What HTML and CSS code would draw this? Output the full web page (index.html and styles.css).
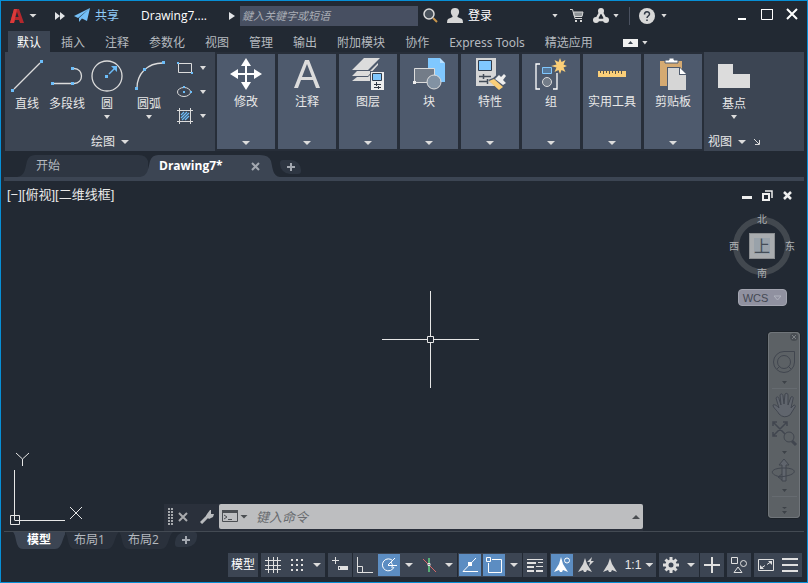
FILE: index.html
```html
<!DOCTYPE html>

<html lang="zh-CN">
    <head>
        <meta charset="utf-8">
        <title>Drawing7</title>
        <meta name="viewport" content="width=device-width, initial-scale=1">
        <link rel="stylesheet" href="styles.css">
    </head>

    <body>
        <div class="window">
            <header class="titlebar">
                <button class="app-menu" aria-label="A">
                    <svg width="14" height="16" viewBox="0 0 14 16"><path d="M0 15L4 1h5l5 14h-4l-1-3H5l-1 3z" fill="#b3282d"/><path d="M0 15L4 1h3L4 15z" fill="#dc3a3a"/><path d="M5.500 9L7 4l1.600 5z" fill="#222933"/></svg>
                    <span class="caret"></span>
                </button>
                <button class="expand" aria-label="&gt;&gt;">
                    <svg width="10" height="8"><path d="M0 0l5 4-5 4zM5 0l5 4-5 4z" fill="#e3e5e8"/></svg>
                </button>
                <button class="share">
                    <svg width="16" height="15" viewBox="0 0 16 15"><path d="M16 0L0 8l4 2zM16 0L5 10v4l2.500-3zM16 0L7 10l6 3z" fill="#74bff7"/></svg>
                    <span>共享</span>
                </button>
                <span class="doc-title">Drawing7....</span>
                <div class="search">
                    <svg width="6" height="8"><path d="M0 0l6 4-6 4z" fill="#e3e5e8"/></svg>
                    <input type="text" placeholder="鍵入关鍵字或短语" aria-label="鍵入关鍵字或短语">
                    <button aria-label="搜索">
                        <svg width="15" height="15" viewBox="0 0 15 15"><path d="M10 10l4 4" stroke="#c9964c" stroke-width="2"/><circle cx="6" cy="6" r="5" fill="#49525c" stroke="#dcdcdc" stroke-width="1.500"/></svg>
                    </button>
                </div>
                <button class="login">
                    <svg width="16" height="15" viewBox="0 0 16 15"><path d="M8 0c5 0 5 5 2.500 8v1L15 11q1 1 1 4H0q0-3 1-4l4.500-2V8C3 5 3 0 8 0z" fill="#d6d6d6"/></svg>
                    <span>登录</span>
                </button>
                <div class="title-tools">
                    <button aria-label="登录菜单"><span class="caret small"></span></button>
                    <button aria-label="购物车"><svg width="14" height="14" viewBox="0 0 14 14"><path d="M0 .5h2.500L5 9.500h7" fill="none" stroke="#d6d6d6"/><path d="M3.500 3H13l-1 4.500H4.500z" fill="#8f9498" stroke="#d6d6d6"/><path d="M5 11h2v2H5zM10 11h2v2h-2z" fill="#d6d6d6"/></svg></button>
                    <button class="apps" aria-label="应用"><svg width="16" height="15" viewBox="0 0 16 15"><path d="M8 3L3 12h10z" fill="none" stroke="#dcdcdc" stroke-width="2.500"/><circle cx="8" cy="3" r="3" fill="#dcdcdc"/><circle cx="3" cy="12" r="3" fill="#dcdcdc"/><circle cx="13" cy="12" r="3" fill="#dcdcdc"/></svg><span class="caret small"></span></button>
                    <button class="help" aria-label="帮助"><svg width="16" height="16" viewBox="0 0 16 16"><circle cx="8" cy="8" r="8" fill="#d8d8d8"/><path d="M5.500 6.500C5.500 3 10.500 3 10.500 6 10.500 8 8 8 8 10M8 11.500v1.500" fill="none" stroke="#303844" stroke-width="1.500"/></svg><span class="caret small"></span></button>
                </div>
                <div class="window-buttons">
                    <button aria-label="最小化"><svg width="12" height="12"><path d="M2 10h8v2H2z" fill="#fff"/></svg></button>
                    <button aria-label="最大化"><svg width="12" height="12"><path d="M.5 1.500h11v10H.5z" fill="none" stroke="#fff"/><path d="M0 1h12v1H0z" fill="#fff"/></svg></button>
                    <button aria-label="关闭"><svg width="12" height="12"><path d="M1 1l10 10M11 1L1 11" stroke="#fff" stroke-width="2"/></svg></button>
                </div>
            </header>

            <nav class="ribbon-tabs">
                <a class="active" href="#">默认</a>
                <a href="#">插入</a>
                <a href="#">注释</a>
                <a href="#">参数化</a>
                <a href="#">视图</a>
                <a href="#">管理</a>
                <a href="#">输出</a>
                <a href="#">附加模块</a>
                <a href="#">协作</a>
                <a href="#">Express Tools</a>
                <a href="#">精选应用</a>
                <button class="ribbon-toggle" aria-label="最小化功能区">
                    <svg width="15" height="8"><path d="M0 0h15v8H0z" fill="#f0f0f0"/><path d="M5 5l2.500-3L10 5z" fill="#39424f"/></svg>
                    <span class="caret small"></span>
                </button>
            </nav>

            <section class="ribbon">
                <div class="panel draw">
                    <div class="tools">
                        <button class="tool">
                            <svg width="32" height="32"><path d="M3 29L29 3" stroke="#dcdcdc" stroke-width="1.300"/><path d="M0 29h3v3H0zM29 0h3v3h-3z" fill="#6cbdf9"/></svg>
                            <span>直线</span>
                        </button>
                        <button class="tool">
                            <svg width="32" height="32"><path d="M2 23.500h19M23 8.500c10 0 10 15 0 15" fill="none" stroke="#dcdcdc" stroke-width="1.300"/><path d="M0 22h3v3H0zM20 7h3v3h-3zM20 22h3v3h-3z" fill="#6cbdf9"/></svg>
                            <span>多段线</span>
                        </button>
                        <button class="tool">
                            <svg width="32" height="32"><circle cx="16" cy="16" r="15" fill="none" stroke="#dcdcdc" stroke-width="1.300"/><path d="M14 15h3v3h-3zM26 6v6l-6-6z" fill="#6cbdf9"/><path d="M18 14l6-6" stroke="#6cbdf9" stroke-width="1.500"/></svg>
                            <span>圆</span>
                            <span class="caret small"></span>
                        </button>
                        <button class="tool wide">
                            <svg width="32" height="32"><path d="M4 28C4 14 14 3 30 3" fill="none" stroke="#dcdcdc" stroke-width="1.300"/><path d="M2 27h3v3H2zM10 8h3v3h-3zM29 1h3v3h-3z" fill="#6cbdf9"/></svg>
                            <span>圆弧</span>
                            <span class="caret small"></span>
                        </button>
                        <div class="small-tools">
                            <button aria-label="矩形"><svg width="16" height="16"><path d="M1.500 3.500h13v9h-13z" fill="none" stroke="#dcdcdc"/><path d="M0 2h2v2H0zM14 12h2v2h-2z" fill="#6cbdf9"/></svg><span class="caret small"></span></button>
                            <button aria-label="椭圆"><svg width="16" height="16"><ellipse cx="7" cy="8" rx="6.500" ry="4.500" fill="none" stroke="#dcdcdc"/><path d="M6 2h2v2H6zM6 7h2v2H6zM13 7h2v2h-2z" fill="#6cbdf9"/></svg><span class="caret small"></span></button>
                            <button aria-label="图案填充"><svg width="16" height="16"><path d="M0 2.500h16M0 13.500h16M2.500 0v16M13.500 0v16" stroke="#dcdcdc"/><path d="M4 7l3-3M4 10l6-6M5 12l7-7M8 12l4-4" stroke="#6cbdf9" stroke-width="1.200"/></svg><span class="caret small"></span></button>
                        </div>
                    </div>
                    <button class="panel-title">绘图 <span class="caret"></span></button>
                </div>

                <div class="collapsed-panels">
                    <button class="collapsed">
                        <svg width="32" height="32"><path d="M16 0l5 8h-4v7h7v-4l8 5-8 5v-4h-7v7h4l-5 8-5-8h4v-7H8v4l-8-5 8-5v4h7V8h-4z" fill="#fff"/></svg>
                        <span>修改</span><span class="caret"></span>
                    </button>
                    <button class="collapsed">
                        <svg width="32" height="32"><path d="M3 30L14 2h4l11 28h-4l-3-8H10l-3 8zM11 19h10L16 6z" fill="#dcdcdc"/></svg>
                        <span>注释</span><span class="caret"></span>
                    </button>
                    <button class="collapsed">
                        <svg width="32" height="32"><path d="M12 0h16L16 12H0zM5 13h13l8-8v2L16 18H0zM5 19h11l2-2v6H0z" fill="#dcdcdc"/><path d="M18 13h14v19H18z" fill="#4e5a6d"/><path d="M19 14h13v18H19z" fill="#eee"/><path d="M20.500 15.500h9v7h-9z" fill="#80c8ff" stroke="#303c4c"/><path d="M22 26.500h7M24.500 24v4M22 29.500h7M26.500 28v3" stroke="#303844"/></svg>
                        <span>图层</span><span class="caret"></span>
                    </button>
                    <button class="collapsed">
                        <svg width="32" height="32"><path d="M15 0h12v5h5v19H15z" fill="#80c8ff"/><path d="M27 0l5 5h-5z" fill="#b9e0ff"/><path d="M1.500 10.500h20v14h-20z" fill="#737c88" stroke="#dcdcdc"/><circle cx="21" cy="24" r="7" fill="#8292a3" stroke="#dcdcdc"/><path d="M0 23h3v3H0z" fill="#eee"/></svg>
                        <span>块</span><span class="caret"></span>
                    </button>
                    <button class="collapsed">
                        <svg width="32" height="32"><path d="M2 0h20v28H2z" fill="#d6d6d6"/><path d="M4.500 2.500h13v10h-13z" fill="#80c8ff" stroke="#303c4c"/><path d="M5 18.500h12M5 23.500h9M9.500 16v5M13.500 21v5" stroke="#444d59" stroke-width="1.500"/><path d="M14 22l5-2 7-6 3 2 4 1-4 4 3 4-6 7z" fill="#4e5a6d"/><path d="M21 21l4-4 2 2 3-3 2 2-3 4 3 3-3 2z" fill="#eee"/><path d="M15 23l5-2 9 8-4 3z" fill="#fbcf78"/></svg>
                        <span>特性</span><span class="caret"></span>
                    </button>
                    <button class="collapsed">
                        <svg width="32" height="32"><path d="M5 6H1v25h4M18 31h4V15" fill="none" stroke="#fff" stroke-width="1.300"/><path d="M7.500 9.500h9v6h-9z" fill="#56799c" stroke="#80c8ff"/><circle cx="12" cy="24" r="4.500" fill="#737c88" stroke="#dcdcdc"/><path d="M25 0l1.500 4 4-2-2 4.500L32 8l-3.500 1.500 2 4.500-4-2-1.500 4-1.500-4-4 2 2-4.500L16 8l5.500-1.500-2-4.500 4 2z" fill="#fbcf78"/></svg>
                        <span>组</span><span class="caret"></span>
                    </button>
                    <button class="collapsed">
                        <svg width="32" height="32"><path d="M2 13h28v6H2z" fill="#fbcf78"/><path d="M4.500 13v2M7.500 13v3M10.500 13v2M13.500 13v3M16.500 13v2M19.500 13v3M22.500 13v2M25.500 13v3" stroke="#5b5548"/></svg>
                        <span>实用工具</span><span class="caret"></span>
                    </button>
                    <button class="collapsed">
                        <svg width="32" height="32"><path d="M3 3h22v25H3z" fill="#d5aa72"/><path d="M8 2h4V0h5v2h4v3H8z" fill="#fff" stroke="#4e5a6d"/><path d="M10 9h13l7 7v16H10z" fill="#4e5a6d"/><path d="M11 10h11v7h7v15H11z" fill="#d6d6d6"/><path d="M23 10l6 6h-6z" fill="#fff"/></svg>
                        <span>剪贴板</span><span class="caret"></span>
                    </button>
                </div>

                <div class="panel view">
                    <div class="tools">
                        <button class="tool">
                            <svg width="32" height="32"><path d="M0 4h15v10h17v14H0z" fill="#dcdcdc"/></svg>
                            <span>基点</span>
                            <span class="caret small"></span>
                        </button>
                    </div>
                    <button class="panel-title">视图 <span class="caret"></span><svg class="launcher" width="6" height="6"><path d="M0 0l5 5M5.500 1v4.500H1" fill="none" stroke="#dcdcdc"/></svg></button>
                </div>
            </section>

            <nav class="file-tabs">
                <a class="file-tab" href="#">开始</a>
                <a class="file-tab active" href="#">Drawing7*
                    <svg width="9" height="9"><path d="M1 1l7 7M8 1L1 8" stroke="#a3a8b0" stroke-width="2"/></svg>
                </a>
                <button class="new-tab" aria-label="新图形"><svg width="8" height="8"><path d="M4 0v8M0 4h8" stroke="#a3a8b0" stroke-width="2"/></svg></button>
            </nav>

            <main class="canvas">
                <div class="viewport-label">[−][俯视][二维线框]</div>

                <div class="viewport-buttons">
                    <button aria-label="最小化视口"><svg width="11" height="11"><path d="M0 6h10v3H0z" fill="#eee"/></svg></button>
                    <button aria-label="还原视口"><svg width="11" height="11"><path d="M1 4h6v6H1z" fill="none" stroke="#eee" stroke-width="2"/><path d="M3 1h7v7" fill="none" stroke="#eee" stroke-width="1.500"/></svg></button>
                    <button aria-label="关闭视口"><svg width="11" height="11"><path d="M2 2l7 7M9 2L2 9" stroke="#eee" stroke-width="2.500"/></svg></button>
                </div>

                <svg class="crosshair" width="97" height="97"><path d="M0 48.500h45M52 48.500h45M48.500 0v45M48.500 52v45M45.500 45.500h6v6h-6z" fill="none" stroke="#e6e6e6"/></svg>

                <svg class="ucs" width="75" height="75"><path d="M5.500 20v50M5.500 70.500H56M1.500 65.500h9v9h-9zM7 3l6.500 6L20 3M13.500 9v7M61 57l12 12M73 57L61 69" fill="none" stroke="#e6e6e6"/></svg>

                <div class="viewcube">
                    <span class="north">北</span>
                    <span class="west">西</span>
                    <button class="face"><span>上</span></button>
                    <span class="east">东</span>
                    <span class="south">南</span>
                </div>
                <button class="wcs">WCS <svg width="9" height="6"><path d="M1 1h7L4.500 5z" fill="none" stroke="#b0b3be"/></svg></button>

                <svg class="navbar" width="32" height="186" fill="none" stroke="#41464f">
                    <path d="M4 56.500h25M4 164.500h25" stroke="#666b70"/>
                    <circle cx="26" cy="5" r="4" fill="#484d53" stroke="none"/><path d="M24 3l4 4M28 3l-4 4" stroke="#7b8085"/>
                    <path d="M16 19.500h10.500V30a10.500 10.500 0 1 1-10.500-10.500z"/><circle cx="16" cy="30" r="6.500"/><path d="M9 37l3-3M23 37l-3-3"/>
                    <path d="M11 82c-2-4-6-6-6-9 2-1 4 1 6 3L8 66c1-2 3-1 3 1l2 6-1-10c1-2 3-1 3 1l1 8 1-10c1-1 3-1 3 1v10l3-8c1-1 3 0 2 2l-2 9 3-3c1 0 2 1 1 2l-5 8q-6 4-11-1z" fill="#60656d"/>
                    <path d="M5 90l14 14M19 90L5 104M5 94v-4h4M15 90h4v4M5 100v4h4" stroke-width="1.500"/><circle cx="21" cy="105" r="5" fill="#5c6165"/><path d="M24 109l4 4" stroke-width="3"/>
                    <path d="M14 149v-16h-3l5-6 5 6h-3v16z" fill="#60656d"/><path d="M13 145c-12-2-12-9 3-9s14 8-6 9M14 142l-4 3 4 3"/>
                    <path d="M14 49h5l-2.500 3zM14 119h5l-2.500 3zM14 157h5l-2.500 3zM14 175h5l-2.500 2zM14 179h5l-2.500 3z" fill="#3d4248" stroke="none"/>
                </svg>

                <div class="command">
                    <svg width="5" height="18"><path d="M1 0v18M4 0v18" stroke="#a6a9ad" stroke-width="2" stroke-dasharray="2 1"/></svg>
                    <button aria-label="关闭"><svg width="10" height="10"><path d="M1 1l8 8M9 1L1 9" stroke="#a9abae" stroke-width="2"/></svg></button>
                    <button class="wrench" aria-label="自定义"><svg width="14" height="14"><path d="M1 13l7-7" stroke="#b9bbbe" stroke-width="3"/><path d="M7 4l3-4h1v4h3l-1 3-4 2-3-3z" fill="#b9bbbe"/></svg></button>
                    <div class="command-line">
                        <button aria-label="最近使用的命令"><svg width="16" height="13"><path d="M.5.5h15v11H.5z" fill="none" stroke="#4b4e52"/><path d="M0 0h16v3H0z" fill="#4b4e52"/><path d="M2 5l3 2-3 2M6 9.500h4" fill="none" stroke="#4b4e52"/></svg><span class="caret dark"></span></button>
                        <input type="text" placeholder="键入命令" aria-label="键入命令">
                        <button aria-label="命令历史"><svg width="8" height="4"><path d="M0 4l4-4 4 4z" fill="#4b4e52"/></svg></button>
                    </div>
                </div>
            </main>

            <nav class="layout-tabs">
                <a class="active" href="#">模型</a>
                <a href="#">布局1</a>
                <a href="#">布局2</a>
                <button aria-label="新建布局"><svg width="8" height="8"><path d="M4 0v8M0 4h8" stroke="#a3a8b0" stroke-width="2"/></svg></button>
            </nav>

            <footer class="statusbar">
                <div class="cells"><button class="model">模型</button></div>
                <div class="cells">
                    <button aria-label="栅格"><svg width="16" height="16"><path d="M0 3.500h16M0 8.500h16M0 12.500h16M3.500 0v16M8.500 0v16M12.500 0v16" stroke="#e0e0e0"/></svg></button>
                    <button aria-label="捕捉"><svg width="16" height="16"><path d="M2 3h14M2 8h14M2 13h14" stroke="#e0e0e0" stroke-width="2" stroke-dasharray="2 3"/></svg></button>
                    <button class="menu" aria-label="捕捉菜单"><span class="caret"></span></button>
                </div>
                <div class="cells near"><button aria-label="动态输入"><svg width="16" height="16"><path d="M3.500 0v7M0 3.500h7" stroke="#e0e0e0"/><path d="M6 9h10v4H6z" fill="#e0e0e0"/><path d="M7.500 10v2" stroke="#3c4553"/></svg></button></div>
                <div class="cells near">
                    <button aria-label="正交"><svg width="16" height="16"><path d="M.500 0v15.500H16M.500 9.500h5v6" fill="none" stroke="#e0e0e0"/></svg></button>
                    <button class="on" aria-label="极轴追踪"><svg width="16" height="16"><path d="M12 4a6 6 0 1 0 1 6M7 8.500h9M7 8L14 1M10 5q2 2 1 6" fill="none" stroke="#fff"/></svg></button>
                    <button class="menu" aria-label="极轴菜单"><span class="caret"></span></button>
                    <button aria-label="等轴测"><svg width="16" height="16"><path d="M2 2l13 13" stroke="#d96868"/><path d="M8 1v14" stroke="#5fd080" stroke-width="1.500"/><path d="M7 6.500h2v2H7z" fill="#303a48" stroke="#eee"/></svg></button>
                    <button class="menu" aria-label="等轴测菜单"><span class="caret"></span></button>
                </div>
                <div class="cells near">
                    <button class="on" aria-label="对象捕捉追踪"><svg width="16" height="16"><path d="M14 1L1 14.500h15" fill="none" stroke="#fff"/><path d="M6 5h4v4H6z" fill="#fff"/></svg></button>
                    <button class="on" aria-label="对象捕捉"><svg width="18" height="18"><path d="M7 3.500h9.500v13h-13V7M1.500 1.500h4v4h-4z" fill="none" stroke="#fff"/></svg></button>
                    <button class="menu" aria-label="对象捕捉菜单"><span class="caret"></span></button>
                </div>
                <div class="cells"><button aria-label="线宽"><svg width="16" height="14"><path d="M0 1.500h16" stroke="#e0e0e0"/><path d="M0 5h9M0 9h7M0 13h7M9 13h7" stroke="#e0e0e0" stroke-width="2"/><path d="M11 4.500h5M9 8.500h7" stroke="#e0e0e0"/></svg></button></div>
                <div class="cells">
                    <button class="on" aria-label="注释可见性"><svg width="16" height="16"><path d="M7 0l2 7 5 8-5-2-1 2H6l-1-2-5 2 5-8z" fill="#fff"/><circle cx="13" cy="3.500" r="2.500" fill="none" stroke="#fff"/></svg></button>
                    <button aria-label="自动缩放"><svg width="16" height="16"><path d="M7 1l2 6 5 8-5-2-1 2H6l-1-2-5 2 5-8z" fill="#d6d6d6"/><path d="M14 0l-5 5h3l-1 4 5-5h-3z" fill="#d6d6d6"/></svg></button>
                    <button aria-label="注释比例"><svg width="16" height="16"><path d="M8 1l2 6 5 8-5-2-1 2H7l-1-2-5 2 5-8z" fill="#d6d6d6"/></svg></button>
                    <button class="scale">1:1 <span class="caret"></span></button>
                </div>
                <div class="cells near">
                    <button aria-label="切换工作空间"><svg width="16" height="16"><circle cx="8" cy="8" r="4" fill="none" stroke="#dcdcdc" stroke-width="3"/><path d="M8 0v4M8 12v4M0 8h4M12 8h4M2.500 2.500L5 5M11 11l2.500 2.500M13.500 2.500L11 5M5 11l-2.500 2.500" stroke="#dcdcdc" stroke-width="3"/></svg></button>
                    <button class="menu" aria-label="工作空间菜单"><span class="caret"></span></button>
                </div>
                <div class="cells"><button aria-label="注释监视器"><svg width="16" height="16"><path d="M8 0v16M0 8h16" stroke="#e0e0e0" stroke-width="2"/></svg></button></div>
                <div class="cells"><button aria-label="隔离对象"><svg width="16" height="16"><path d="M.5.500h6v6h-6zM7 10l4 5.500H3z" fill="none" stroke="#e0e0e0"/><circle cx="12.500" cy="6.500" r="3" fill="none" stroke="#e0e0e0"/></svg></button></div>
                <div class="cells last">
                    <button aria-label="全屏显示"><svg width="16" height="12"><path d="M.5.500h15v11H.5z" fill="none" stroke="#e0e0e0"/><path d="M10 2h4v4zM2 6v4h4z" fill="#e0e0e0"/><path d="M9 5.500l3-2M4 8.500l3-2" stroke="#e0e0e0"/></svg></button>
                    <button aria-label="自定义"><svg width="16" height="16"><path d="M0 2h16M0 8h16M0 14h16" stroke="#e0e0e0" stroke-width="2"/></svg></button>
                </div>
            </footer>
        </div>
    </body>
</html>
```
FILE: styles.css
```css
* {
    box-sizing: border-box;
}

body {
    margin: 0;
    background: #222933;
    color: #e8e8e8;
    font-family: "Open Sans", "Noto Sans CJK SC", sans-serif;
    font-size: 12px;
    line-height: 16px;
    user-select: none;
}

button {
    display: flex;
    align-items: center;
    justify-content: center;
    margin: 0;
    padding: 0;
    border: 0;
    background: none;
    color: inherit;
    font: inherit;
    white-space: nowrap;
}

a {
    color: inherit;
    text-decoration: none;
    white-space: nowrap;
}

input {
    min-width: 0;
    border: 0;
    outline: 0;
    background: none;
    font: inherit;
}

svg {
    display: block;
    flex: none;
}

.window {
    display: flex;
    flex-direction: column;
    min-height: 100vh;
    border: 1px solid #078fd6;
}

.caret {
    flex: none;
    width: 8px;
    height: 4px;
    background: #dcdcdc;
    clip-path: polygon(0 0, 100% 0, 50% 100%);
}

.caret.small {
    width: 6px;
    height: 4px;
}

.caret.dark {
    background: #4b4e52;
}

/* title bar */

.titlebar {
    display: flex;
    align-items: center;
    height: 29px;
    padding: 0 9px 0 8px;
}

.app-menu {
    gap: 5px;
    width: 46px;
    justify-content: flex-start;
    padding-left: 1px;
}

.share {
    gap: 5px;
    margin-left: 9px;
    color: #8fcbf8;
}

.doc-title {
    width: 88px;
    margin-left: 22px;
    color: #fff;
}

.search {
    display: flex;
    align-items: center;
    gap: 5px;
}

.search input {
    width: 178px;
    height: 20px;
    padding: 0 2px;
    background: #474f61;
    color: #fff;
    font-size: 11px;
}

.search input::placeholder {
    color: #a9adb5;
    font-style: italic;
    opacity: 1;
}

.login {
    gap: 5px;
    margin-left: 9px;
    color: #fff;
}

.title-tools {
    display: flex;
    align-items: center;
    gap: 12px;
    margin-left: auto;
}

.apps {
    gap: 4px;
    height: 18px;
    margin-left: -3px;
    padding-right: 10px;
    border-right: 1px solid #4a5160;
}

.help {
    gap: 6px;
    margin-left: -3px;
}

.window-buttons {
    display: flex;
    gap: 13px;
    margin: 0 0 4px 69px;
}

/* ribbon */

.ribbon-tabs {
    display: flex;
    height: 22px;
    padding: 1px 0 0 7px;
    color: #b5b9bf;
    font-family: "Noto Sans", "Noto Sans CJK SC", sans-serif;
}

.ribbon-tabs a {
    padding: 4px 10px 0;
}

.ribbon-tabs .active {
    padding: 4px 9px 0;
    margin-right: 1px;
    background: #3c4553;
    color: #fff;
}

.ribbon-toggle {
    gap: 4px;
    margin: 2px 0 0 20px;
}

.ribbon {
    display: flex;
    height: 99px;
    margin: 0 3px 0 4px;
    background: #3c4553;
}

.panel {
    display: flex;
    flex-direction: column;
    justify-content: space-between;
    padding: 8px 2px 1px;
}

.draw {
    width: 210px;
}

.tools {
    display: flex;
}

.tool {
    flex-direction: column;
    justify-content: flex-start;
    width: 40px;
}

.tool span:nth-child(2) {
    margin: 4px 0 3px;
}

.tool.wide {
    width: 44px;
}

.small-tools {
    display: flex;
    flex-direction: column;
    gap: 8px;
    padding-left: 6px;
}

.small-tools button {
    gap: 7px;
}

.panel-title {
    gap: 6px;
}

.collapsed-panels {
    display: flex;
    gap: 3px;
    padding: 2px 2px;
    background: #272e39;
}

.collapsed {
    flex-direction: column;
    justify-content: flex-start;
    width: 58px;
    padding: 4px 0;
    background: #4e5a6d;
}

.collapsed span:nth-child(2) {
    margin-top: 4px;
}

.collapsed .caret {
    margin-top: auto;
}

.view .tool {
    width: 56px;
}

.launcher {
    margin-left: 2px;
}

/* file tabs */

.file-tabs {
    display: flex;
    align-items: flex-end;
    height: 30px;
    margin: 0 3px;
    padding-left: 13px;
    border-bottom: 4px solid #3c4553;
}

.file-tab {
    display: flex;
    align-items: center;
    justify-content: space-between;
    width: 132px;
    height: 22px;
    padding: 0 19px;
    background: #2e3642;
    color: #b5b9bf;
    clip-path: path("M0 22C8 21 8 14 10 6Q12 0 18 0H122Q129 0 131 6V22Z");
}

.file-tab.active {
    width: 140px;
    margin-left: -9px;
    padding: 0 20px 0 19px;
    background: #3c4553;
    color: #fff;
    font-weight: bold;
    clip-path: path("M0 22C8 21 8 14 10 6Q12 0 18 0H120Q129 0 131 6C133 15 133 21 140 22Z");
}

.new-tab {
    width: 21px;
    height: 14px;
    margin-bottom: 3px;
    background: #2e3642;
    border-radius: 3px 10px 3px 10px;
}

/* drawing area */

.canvas {
    position: relative;
    flex: 1;
    min-height: 350px;
}

.viewport-label {
    padding: 6px;
    font-family: "Liberation Sans", "Noto Sans CJK SC", sans-serif;
    font-size: 13px;
}

.viewport-buttons {
    position: absolute;
    top: 9px;
    right: 14px;
    display: flex;
    gap: 9px;
}

.crosshair {
    position: absolute;
    top: 110px;
    left: 381px;
}

.ucs {
    position: absolute;
    bottom: 6px;
    left: 8px;
}

.viewcube {
    position: absolute;
    top: 36px;
    right: 16px;
    width: 58px;
    height: 58px;
    border: 6px solid #42484f;
    border-radius: 50%;
    color: #aeb1b4;
    font-size: 10px;
    line-height: 12px;
}

.viewcube > span {
    position: absolute;
}

.north {
    top: -10px;
    left: 18px;
}

.south {
    bottom: -10px;
    left: 18px;
}

.west {
    top: 17px;
    left: -10px;
}

.east {
    top: 17px;
    right: -10px;
}

.face {
    width: 26px;
    height: 26px;
    margin: 10px;
    border: 1px solid #8b8e91;
    background: #a9acaf;
    color: #444d57;
    font-size: 16px;
    line-height: 16px;
}

.face span {
    background: #99a2aa;
}

.wcs {
    position: absolute;
    top: 108px;
    right: 20px;
    gap: 5px;
    width: 49px;
    height: 17px;
    border: 1px solid #a3a5b0;
    border-radius: 4px;
    background: #9091a0;
    color: #434853;
    font-family: "Liberation Sans", sans-serif;
    font-size: 11px;
}

.navbar {
    position: absolute;
    top: 151px;
    right: 7px;
    border-radius: 4px;
    background: #5c6165;
    box-shadow: 0 0 0 1px #1c2228, inset 0 0 0 1px #70757a;
}

.command {
    position: absolute;
    bottom: 0;
    left: 163px;
    right: 164px;
    display: flex;
    align-items: center;
    gap: 5px;
    height: 27px;
    padding: 0 0 2px 4px;
    background: #2a303b;
}

.wrench {
    margin: 0 0 0 7px;
}

.command-line {
    display: flex;
    flex: 1;
    align-items: center;
    height: 25px;
    padding: 0 3px;
    border-radius: 2px;
    background: #bdbec0;
}

.command-line button {
    gap: 2px;
}

.command-line input {
    flex: 1;
    padding: 0 8px;
    color: #222;
    font-size: 13px;
}

.command-line input::placeholder {
    color: #686b6f;
    font-style: italic;
    opacity: 1;
}

/* layout tabs */

.layout-tabs {
    display: flex;
    height: 18px;
    margin: 0 3px;
    padding-left: 9px;
    border-top: 1px solid #434a53;
    color: #b5b9bf;
}

.layout-tabs a {
    width: 54px;
    padding-left: 9px;
    background: #2a313c;
    clip-path: path("M0 0C4 4 2 17 10 17H42C50 17 49 4 54 0Z");
}

.layout-tabs .active {
    width: 52px;
    padding-left: 14px;
    background: #3c4553;
    color: #fff;
    font-weight: bold;
}

.layout-tabs button {
    width: 22px;
    height: 15px;
    margin-left: 2px;
    background: #2e3642;
    border-radius: 10px 3px 10px 3px;
}

/* status bar */

.statusbar {
    display: flex;
    justify-content: flex-end;
    gap: 3px;
    padding: 4px 5px 5px;
}

.cells {
    display: flex;
    height: 24px;
    background: #3c4553;
}

.cells.near {
    margin-right: -2px;
}

.cells button {
    width: 24px;
}

.cells .on {
    border: 1px solid #3c4553;
    background: #5c8dc2;
}

.cells .menu {
    width: 16px;
}

.cells .model {
    width: 30px;
    color: #fff;
}

.cells .scale {
    gap: 4px;
    width: 34px;
    font-family: "Liberation Sans", sans-serif;
}
```
